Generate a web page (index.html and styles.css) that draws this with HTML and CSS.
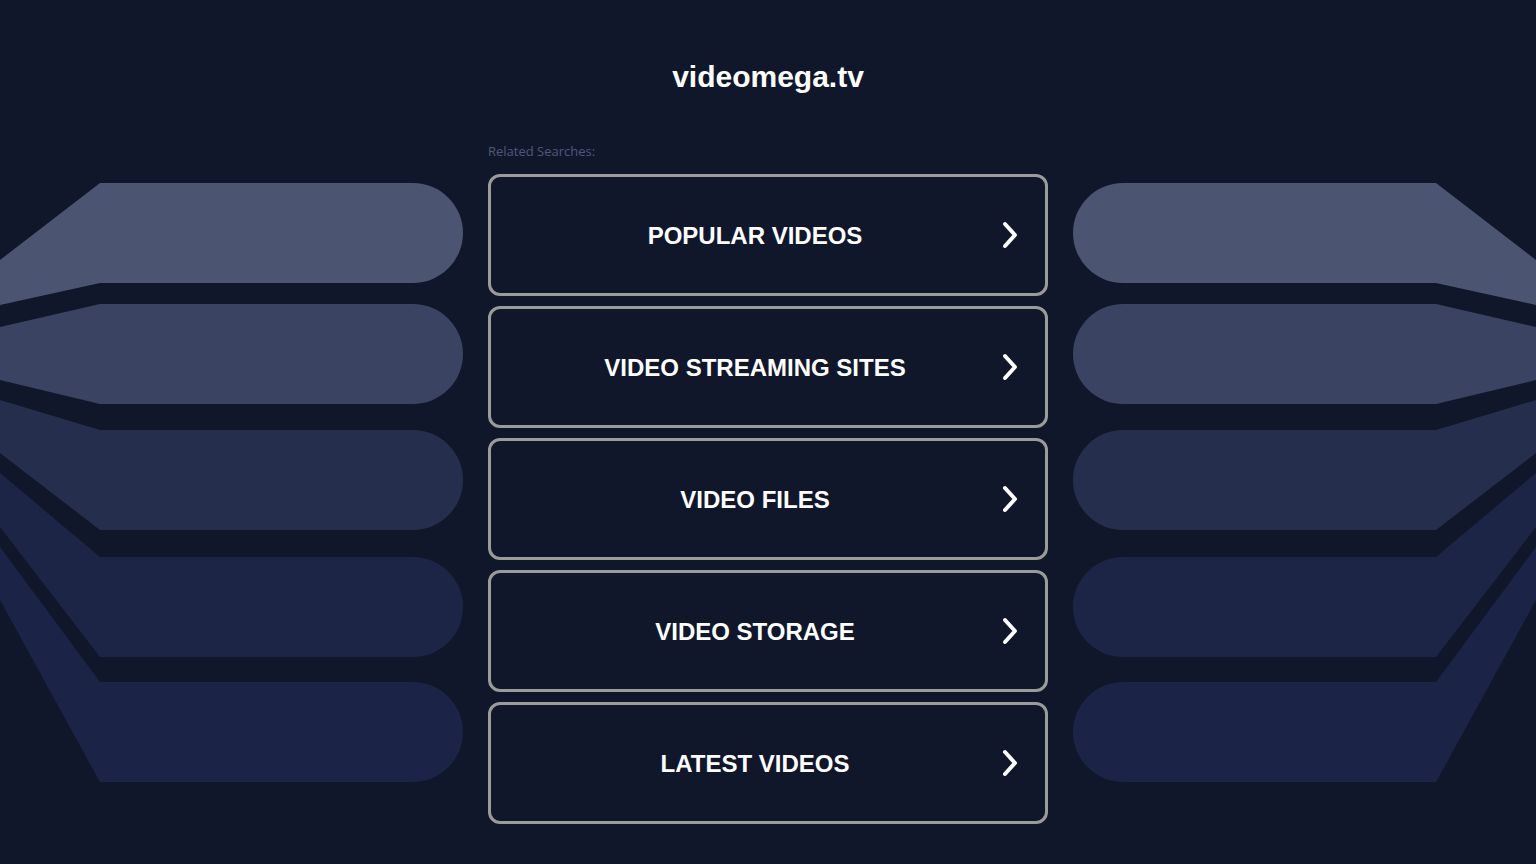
FILE: index.html
```html
<!DOCTYPE html>
<html lang="en">
<head>
<meta charset="utf-8">
<title>videomega.tv</title>
<link rel="stylesheet" href="styles.css">
</head>
<body>
<svg class="backdrop" viewBox="0 0 1536 864" preserveAspectRatio="none" aria-hidden="true">
  <g id="wing">
    <path class="b1" d="M0,260 L100,183 L413,183 A50,50 0 0 1 413,283 L100,283 L0,305 Z"/>
    <path class="b2" d="M0,327 L100,304 L413,304 A50,50 0 0 1 413,404 L100,404 L0,380 Z"/>
    <path class="b3" d="M0,400 L100,430 L413,430 A50,50 0 0 1 413,530 L100,530 L0,453 Z"/>
    <path class="b4" d="M0,473 L100,557 L413,557 A50,50 0 0 1 413,657 L100,657 L0,527 Z"/>
    <path class="b5" d="M0,547 L100,682 L413,682 A50,50 0 0 1 413,782 L100,782 L0,600 Z"/>
  </g>
  <use href="#wing" transform="translate(1536,0) scale(-1,1)"/>
</svg>
<main class="page">
  <h1 class="domain">videomega.tv</h1>
  <p class="related">Related Searches:</p>
  <ul class="links">
    <li><a class="link" href="#"><span class="label">POPULAR VIDEOS</span><svg class="chev" viewBox="0 0 18 28"><path d="M4,3 L14,14 L4,25"/></svg></a></li>
    <li><a class="link" href="#"><span class="label">VIDEO STREAMING SITES</span><svg class="chev" viewBox="0 0 18 28"><path d="M4,3 L14,14 L4,25"/></svg></a></li>
    <li><a class="link" href="#"><span class="label">VIDEO FILES</span><svg class="chev" viewBox="0 0 18 28"><path d="M4,3 L14,14 L4,25"/></svg></a></li>
    <li><a class="link" href="#"><span class="label">VIDEO STORAGE</span><svg class="chev" viewBox="0 0 18 28"><path d="M4,3 L14,14 L4,25"/></svg></a></li>
    <li><a class="link" href="#"><span class="label">LATEST VIDEOS</span><svg class="chev" viewBox="0 0 18 28"><path d="M4,3 L14,14 L4,25"/></svg></a></li>
  </ul>
</main>
</body>
</html>
```

FILE: styles.css
```css
html, body {
  margin: 0;
  padding: 0;
  height: 100%;
}
body {
  background: #11172b;
  font-family: "Liberation Sans", Arial, sans-serif;
  color: #fff;
  overflow: hidden;
  position: relative;
}
.backdrop {
  position: absolute;
  left: 0;
  top: 0;
  width: 1536px;
  height: 864px;
  z-index: 0;
}
.b1 { fill: #4b5572; }
.b2 { fill: #3a4361; }
.b3 { fill: #262e4d; }
.b4 { fill: #1d2546; }
.b5 { fill: #1b2446; }

.page {
  position: relative;
  z-index: 1;
  width: 560px;
  margin: 0 auto;
  padding-top: 59px;
}
.domain {
  margin: 0;
  font-size: 30px;
  line-height: 36px;
  font-weight: bold;
  text-align: center;
  color: #fff;
}
.related {
  margin: 47px 0 0;
  font-family: "Open Sans", "Liberation Sans", sans-serif;
  font-size: 13px;
  line-height: 18px;
  color: #50577a;
}
.links {
  list-style: none;
  margin: 14px 0 0;
  padding: 0;
  display: flex;
  flex-direction: column;
  gap: 10px;
}
.link {
  box-sizing: border-box;
  height: 122px;
  border: 3px solid #9b9b9b;
  border-radius: 12px;
  display: flex;
  align-items: center;
  padding-right: 26px;
  text-decoration: none;
  color: #fff;
}
.label {
  flex: 1;
  text-align: center;
  font-size: 24px;
  font-weight: bold;
  line-height: 28px;
  padding-top: 2px;
}
.chev {
  width: 18px;
  height: 28px;
  margin-left: -18px;
  flex: none;
}
.chev path {
  fill: none;
  stroke: #fff;
  stroke-width: 4;
  stroke-linecap: round;
  stroke-linejoin: round;
}
```
